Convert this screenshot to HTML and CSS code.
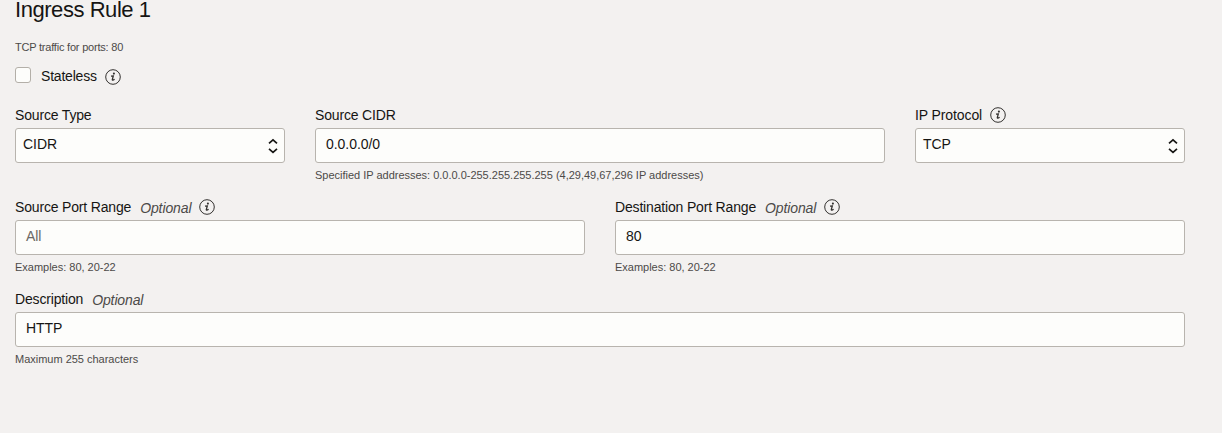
FILE: index.html
```html
<!DOCTYPE html>
<html lang="en">
<head>
<meta charset="utf-8">
<title>Ingress Rule 1</title>
<link rel="stylesheet" href="styles.css">
</head>
<body>
<svg class="defs" width="0" height="0" aria-hidden="true">
  <symbol id="info" viewBox="0 0 16 16">
    <circle cx="8" cy="8" r="7.3" fill="none" stroke="currentColor" stroke-width="1"/>
    <circle cx="8.9" cy="4.6" r="1.05" fill="currentColor"/>
    <path d="M6 7.2 8.3 6.9 7.3 10.6 Q7.2 11.8 9.6 10.2" fill="none" stroke="currentColor" stroke-width="1.3"/>
  </symbol>
  <symbol id="updown" viewBox="0 0 10 16">
    <path d="M1 5.4 5 1.9 9 5.4M1 10.8 5 14.3 9 10.8" fill="none" stroke="currentColor" stroke-width="1.7"/>
  </symbol>
</svg>
<main class="rule">
  <h1 class="title">Ingress Rule 1</h1>
  <p class="summary">TCP traffic for ports: 80</p>
  <label class="stateless">
    <span class="checkbox"></span><span class="stateless-text">Stateless</span>
    <svg class="info"><use href="#info"/></svg>
  </label>

  <div class="row row-source">
    <div class="field">
      <div class="label"><span class="name">Source Type</span></div>
      <div class="control select"><span>CIDR</span><svg class="arrows"><use href="#updown"/></svg></div>
    </div>
    <div class="field">
      <div class="label"><span class="name">Source CIDR</span></div>
      <div class="control"><span>0.0.0.0/0</span></div>
      <div class="help">Specified IP addresses: 0.0.0.0-255.255.255.255 (4,29,49,67,296 IP addresses)</div>
    </div>
    <div class="field">
      <div class="label"><span class="name name-protocol">IP Protocol</span><svg class="info"><use href="#info"/></svg></div>
      <div class="control select"><span>TCP</span><svg class="arrows"><use href="#updown"/></svg></div>
    </div>
  </div>

  <div class="row row-ports">
    <div class="field">
      <div class="label"><span class="name">Source Port Range</span><em class="optional">Optional</em><svg class="info"><use href="#info"/></svg></div>
      <div class="control"><span class="placeholder">All</span></div>
      <div class="help">Examples: 80, 20-22</div>
    </div>
    <div class="field">
      <div class="label"><span class="name">Destination Port Range</span><em class="optional">Optional</em><svg class="info"><use href="#info"/></svg></div>
      <div class="control"><span>80</span></div>
      <div class="help">Examples: 80, 20-22</div>
    </div>
  </div>

  <div class="row">
    <div class="field">
      <div class="label"><span class="name">Description</span><em class="optional">Optional</em></div>
      <div class="control"><span>HTTP</span></div>
      <div class="help">Maximum 255 characters</div>
    </div>
  </div>
</main>
</body>
</html>
```

FILE: styles.css
```css
* { box-sizing: border-box; }
body {
  margin: 0;
  height: 433px;
  overflow: hidden;
  background: #f3f1f0;
  color: #161513;
  font: 14px/20px "Liberation Sans", Arial, sans-serif;
}
.defs { display: block; }
.rule { width: 1185px; padding-left: 15px; }
.title {
  height: 24px;
  margin: 0;
  font-size: 22px;
  line-height: 20px;
  font-weight: 400;
  letter-spacing: -0.45px;
}
.summary {
  margin: 14px 0 0;
  font-size: 11px;
  line-height: 18px;
  letter-spacing: -0.21px;
  color: #4c4a48;
}
.stateless { display: flex; height: 46px; padding-top: 11px; }
.checkbox {
  width: 16px;
  height: 16px;
  border: 1px solid #b3afa8;
  border-radius: 3px;
  background: #fdfdfb;
}
.stateless-text { margin: -1px 8px 0 10px; letter-spacing: -0.2px; }
.info { flex: none; width: 16px; height: 16px; color: #33312f; }
.stateless .info { margin-top: 2px; }
.row { display: grid; gap: 30px; height: 92px; }
.row-source { grid-template-columns: 270px 570px 270px; }
.row-ports { grid-template-columns: 570px 570px; }
.label { display: flex; height: 26px; padding-top: 3px; }
.label .info { margin: 2px 0 0 8px; }
.name { letter-spacing: -0.17px; }
.name-protocol { letter-spacing: -0.1px; }
.optional { margin: 1px 0 0 9px; letter-spacing: -0.12px; color: #4c4a48; }
.control {
  display: flex;
  justify-content: space-between;
  height: 35px;
  padding: 5px 10px 0;
  border: 1px solid #b8b4ae;
  border-radius: 3px;
  background: #fdfdfb;
  letter-spacing: -0.05px;
}
.select { padding: 5px 6px 0 7px; }
.arrows { width: 10px; height: 16px; margin-top: 4px; }
.placeholder { color: #6b6966; }
.help {
  padding-top: 3px;
  font-size: 11px;
  line-height: 18px;
  letter-spacing: -0.01px;
  color: #4c4a48;
}
```
